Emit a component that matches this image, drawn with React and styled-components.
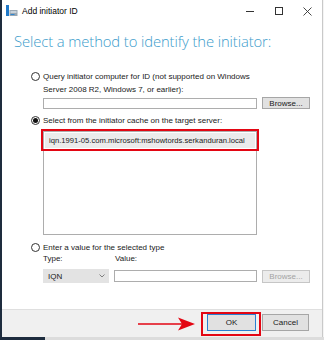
import React from "react";
import styled, { createGlobalStyle } from "styled-components";

const GlobalStyle = createGlobalStyle`
  html, body {
    margin: 0;
    padding: 0;
    background: #f4f4f4;
  }
  body {
    font-family: "Liberation Sans", Arial, sans-serif;
    font-size: 8px;
    color: #1a1a1a;
  }
`;

const Screen = styled.div`
  width: 324px;
  height: 340px;
  display: flex;
  flex-direction: column;
  overflow: hidden;
`;

const Window = styled.div`
  width: 320px;
  height: 337px;
  background: #fff;
  border-left: 2px solid #1e2c3e;
  border-right: 1px solid #c9c9c9;
  display: flex;
  flex-direction: column;
  box-sizing: content-box;
`;

const BottomStrip = styled.div`
  height: 3px;
  display: flex;
  .dark {
    width: 45px;
    background: #1e2c3e;
  }
  .light {
    flex: 1;
    background: #dcdcdc;
  }
`;

const TitleBar = styled.div`
  height: 28px;
  display: flex;
  align-items: flex-start;
  padding: 5px 0 0 4px;
  box-sizing: border-box;
  .title {
    margin-left: 4px;
    margin-top: 1px;
    font-size: 8.5px;
    color: #000;
  }
  .controls {
    margin-left: auto;
    display: flex;
    align-items: center;
    height: 12px;
  }
`;

const Control = styled.div`
  width: 29px;
  height: 12px;
  display: flex;
  align-items: center;
  justify-content: center;
`;

const Body = styled.div`
  flex: 1;
  display: flex;
  flex-direction: column;
`;

const Heading = styled.h1`
  margin: 4px 0 0 12px;
  font-family: "Open Sans", "Liberation Sans", sans-serif;
  font-weight: 300;
  font-size: 14.8px;
  line-height: 18px;
  color: #3b9ccb;
  letter-spacing: -0.1px;
`;

const Options = styled.div`
  padding: 20px 0 0 29px;
  display: flex;
  flex-direction: column;
`;

const RadioRow = styled.label`
  display: flex;
  align-items: flex-start;
  gap: 3px;
  margin-top: ${(p) => p.$top || 0}px;
  line-height: 13px;
`;

const Radio = styled.span`
  width: 9px;
  height: 9px;
  margin-top: 2px;
  border-radius: 50%;
  border: 1px solid #333;
  box-sizing: border-box;
  flex: none;
  display: flex;
  align-items: center;
  justify-content: center;
  &::after {
    content: "";
    width: 5px;
    height: 5px;
    border-radius: 50%;
    background: ${(p) => (p.$checked ? "#111" : "transparent")};
  }
`;

const Indent = styled.div`
  margin-left: 12px;
  display: flex;
  flex-direction: column;
`;

const FieldRow = styled.div`
  display: flex;
  align-items: ${(p) => p.$align || "center"};
  gap: 5px;
  margin-top: ${(p) => p.$top || 0}px;
`;

const TextInput = styled.div`
  width: ${(p) => p.$w}px;
  height: ${(p) => p.$h || 11}px;
  border: 1px solid #adadad;
  background: #fff;
  box-sizing: border-box;
`;

const Button = styled.div`
  width: ${(p) => p.$w}px;
  height: ${(p) => p.$h}px;
  box-sizing: border-box;
  border: 1px solid ${(p) => (p.$default ? "#2b7fd0" : p.$disabled ? "#c6c6c6" : "#a6a6a6")};
  background: ${(p) => (p.$disabled ? "#ececec" : "#e1e1e1")};
  color: ${(p) => (p.$disabled ? "#a3a3a3" : "#1a1a1a")};
  display: flex;
  align-items: center;
  justify-content: center;
  font-size: 8px;
  position: relative;
`;

const ListBox = styled.div`
  width: 214px;
  height: 104px;
  margin-top: 4px;
  border: 1px solid #adadad;
  box-sizing: border-box;
  padding: 1px;
  position: relative;
`;

const ListItem = styled.div`
  height: 15px;
  background: #ebebeb;
  display: flex;
  align-items: center;
  padding-left: 4px;
  font-size: 7.65px;
`;

const RedFrame = styled.div`
  position: absolute;
  left: ${(p) => p.$l}px;
  top: ${(p) => p.$t}px;
  width: ${(p) => p.$w}px;
  height: ${(p) => p.$h}px;
  border: 2.5px solid #e30613;
  box-sizing: border-box;
  pointer-events: none;
`;

const Labels = styled.div`
  display: flex;
  margin-top: -2px;
  line-height: 13px;
  span:first-child {
    width: 72px;
  }
`;

const Combo = styled.div`
  width: 66px;
  height: 14px;
  background: #e3e3e3;
  border: 1px solid #e3e3e3;
  box-sizing: border-box;
  display: flex;
  align-items: center;
  justify-content: space-between;
  padding: 0 3px 0 4px;
  font-size: 8px;
`;

const Footer = styled.div`
  height: 28px;
  margin-top: auto;
  background: #f0f0f0;
  border-top: 1px solid #dfdfdf;
  box-sizing: border-box;
  display: flex;
  align-items: flex-start;
  justify-content: flex-end;
  gap: 6px;
  padding: 4px 13px 0 0;
  position: relative;
`;

const Arrow = styled.svg`
  position: absolute;
  left: 136px;
  top: 6px;
`;

export default function App() {
  return (
    <Screen>
      <GlobalStyle />
      <Window>
        <TitleBar>
          <svg width="12" height="11" viewBox="0 0 12 11">
            <rect x="0" y="0" width="3" height="11" fill="#1e78c8" />
            <rect x="3.5" y="5" width="8" height="6" fill="#9aa7b3" />
            <rect x="4.5" y="6" width="6" height="2" fill="#c9d3dc" />
            <rect x="4.5" y="9" width="4" height="1" fill="#2f86d0" />
          </svg>
          <span className="title">Add initiator ID</span>
          <div className="controls">
            <Control>
              <svg width="8" height="8" viewBox="0 0 8 8">
                <line x1="0" y1="4.5" x2="8" y2="4.5" stroke="#333" strokeWidth="1" />
              </svg>
            </Control>
            <Control>
              <svg width="8" height="8" viewBox="0 0 8 8">
                <rect x="0.5" y="0.5" width="7" height="7" fill="none" stroke="#333" strokeWidth="1" />
              </svg>
            </Control>
            <Control>
              <svg width="9" height="9" viewBox="0 0 9 9">
                <path d="M0.5 0.5 L8.5 8.5 M8.5 0.5 L0.5 8.5" stroke="#333" strokeWidth="0.9" />
              </svg>
            </Control>
          </div>
        </TitleBar>
        <Body>
          <Heading>Select a method to identify the initiator:</Heading>
          <Options>
            <RadioRow>
              <Radio />
              <span>
                Query initiator computer for ID (not supported on Windows
                <br />
                Server 2008 R2, Windows 7, or earlier):
              </span>
            </RadioRow>
            <Indent>
              <FieldRow $top={1}>
                <TextInput $w={214} $h={11} />
                <Button $w={48} $h={12}>Browse...</Button>
              </FieldRow>
            </Indent>
            <RadioRow $top={5}>
              <Radio $checked />
              <span>Select from the initiator cache on the target server:</span>
            </RadioRow>
            <Indent>
              <ListBox>
                <ListItem>iqn.1991-05.com.microsoft:mshowtords.serkanduran.local</ListItem>
                <RedFrame $l={-3} $t={-3} $w={218} $h={22} />
              </ListBox>
            </Indent>
            <RadioRow $top={6}>
              <Radio />
              <span>Enter a value for the selected type</span>
            </RadioRow>
            <Indent>
              <Labels>
                <span>Type:</span>
                <span>Value:</span>
              </Labels>
              <FieldRow $top={4}>
                <Combo>
                  <span>IQN</span>
                  <svg width="6" height="4" viewBox="0 0 6 4">
                    <path d="M0.5 0.5 L3 3 L5.5 0.5" fill="none" stroke="#666" strokeWidth="0.8" />
                  </svg>
                </Combo>
                <TextInput $w={143} $h={12} />
                <Button $w={48} $h={13} $disabled>Browse...</Button>
              </FieldRow>
            </Indent>
          </Options>
          <Footer>
            <Arrow width="58" height="16" viewBox="0 0 58 16">
              <line x1="0" y1="8" x2="44" y2="8" stroke="#e30613" strokeWidth="1.6" />
              <path d="M40 1.5 L57 8 L40 14.5 L44 8 Z" fill="#e30613" />
            </Arrow>
            <Button $w={49} $h={17} $default>
              OK
              <RedFrame $l={-7} $t={-3} $w={60} $h={24} />
            </Button>
            <Button $w={47} $h={17}>Cancel</Button>
          </Footer>
        </Body>
      </Window>
      <BottomStrip>
        <div className="dark" />
        <div className="light" />
      </BottomStrip>
    </Screen>
  );
}
